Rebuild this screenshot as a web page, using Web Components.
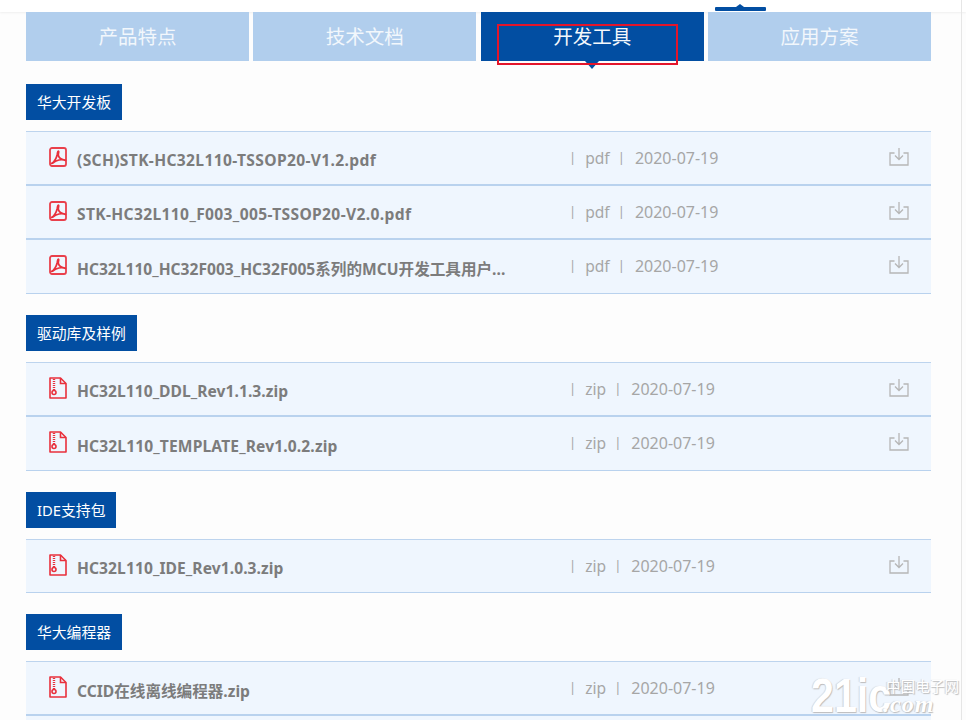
<!DOCTYPE html>
<html lang="zh">
<head>
<meta charset="utf-8">
<title>开发工具</title>
<style>
  html, body { margin: 0; height: 720px; overflow: hidden; background: #fdfdfd; }
  body { font-family: "Noto Sans", "Noto Sans CJK SC", sans-serif; }
</style>
</head>
<body>
<product-page>
  <page-topbar slot="top"></page-topbar>
  <tab-bar slot="top">
    <tab-item>产品特点</tab-item>
    <tab-item>技术文档</tab-item>
    <tab-item active>开发工具</tab-item>
    <tab-item>应用方案</tab-item>
  </tab-bar>

  <file-group label="华大开发板">
    <file-row kind="pdf" style="--track:.35px" name="(SCH)STK-HC32L110-TSSOP20-V1.2.pdf"></file-row>
    <file-row kind="pdf" style="--track:.35px" name="STK-HC32L110_F003_005-TSSOP20-V2.0.pdf"></file-row>
    <file-row kind="pdf" name="HC32L110_HC32F003_HC32F005系列的MCU开发工具用户..."></file-row>
  </file-group>
  <file-group label="驱动库及样例">
    <file-row kind="zip" style="--track:.05px" name="HC32L110_DDL_Rev1.1.3.zip"></file-row>
    <file-row kind="zip" style="--track:.13px" name="HC32L110_TEMPLATE_Rev1.0.2.zip"></file-row>
  </file-group>
  <file-group label="IDE支持包">
    <file-row kind="zip" style="--track:.08px" name="HC32L110_IDE_Rev1.0.3.zip"></file-row>
  </file-group>
  <file-group label="华大编程器">
    <file-row kind="zip" name="CCID在线离线编程器.zip"></file-row>
    <file-row></file-row>
  </file-group>

  <red-marker slot="over"></red-marker>
  <site-watermark slot="over"></site-watermark>
</product-page>

<script>
class ProductPage extends HTMLElement {
  connectedCallback() {
    this.attachShadow({ mode: 'open' });
    this.shadowRoot.innerHTML = `
      <style>
        :host { display: block; position: relative; height: 720px; overflow: hidden; }
        .main { display: flex; flex-direction: column; gap: 21px; margin: 23px 35px 0 26px; }
        .edge { position: absolute; top: 0; bottom: 0; left: 961px; width: 1px; background: #e6e6e6; }
      </style>
      <slot name="top"></slot>
      <div class="main"><slot></slot></div>
      <div class="edge"></div>
      <slot name="over"></slot>
    `;
  }
}

class PageTopbar extends HTMLElement {
  connectedCallback() {
    this.attachShadow({ mode: 'open' });
    this.shadowRoot.innerHTML = `
      <style>
        :host { display: block; position: relative; height: 12px; background: #fff; box-shadow: 0 1px 2px rgba(0,0,0,.06); }
        .mark { position: absolute; left: 715px; top: 7px; width: 51px; height: 4px; background: #024ea2; border-radius: 1px; }
        .mark::before { content: ""; position: absolute; left: 21px; top: -3px; border: 4px solid transparent; border-top: 0; border-bottom: 3px solid #024ea2; }
      </style>
      <div class="mark"></div>
    `;
  }
}

class TabBar extends HTMLElement {
  connectedCallback() {
    this.attachShadow({ mode: 'open' });
    this.shadowRoot.innerHTML = `
      <style>
        :host { display: grid; grid-template-columns: repeat(4, 1fr); column-gap: 4.5px; width: 905px; margin-left: 26px; position: relative; }
      </style>
      <slot></slot>
    `;
  }
}

class TabItem extends HTMLElement {
  connectedCallback() {
    this.attachShadow({ mode: 'open' });
    this.shadowRoot.innerHTML = `
      <style>
        :host { display: block; position: relative; height: 49px; line-height: 50px; text-align: center; background: #b1ceed; color: #f2f7fc; font-size: 19.5px; }
        :host([active]) { background: #024ea2; color: #f4f8fc; }
        :host([active])::after { content: ""; position: absolute; left: 50%; margin-left: -7px; top: 49px; border: 7px solid transparent; border-bottom: 0; border-top: 8px solid #024ea2; }
      </style>
      <slot></slot>
    `;
  }
}

class FileGroup extends HTMLElement {
  connectedCallback() {
    this.attachShadow({ mode: 'open' });
    this.shadowRoot.innerHTML = `
      <style>
        :host { display: block; }
        .label { display: inline-block; height: 36px; line-height: 36px; padding: 0 11px; background: #024ea2; color: #fff; font-size: 14.8px; vertical-align: top; }
        .list { margin-top: 11px; border-top: 1px solid #bdd4ee; }
      </style>
      <div class="label"></div>
      <div class="list"><slot></slot></div>
    `;
    this.shadowRoot.querySelector('.label').textContent = this.getAttribute('label');
  }
}

const ICONS = {
  // acrobat style sheet with the swoosh
  pdf: `<svg class="icon" viewBox="0 0 18 20">
      <rect x="1" y="1" width="16" height="18" rx="2" fill="none" stroke="#e9404c" stroke-width="1.800"/>
      <path d="M2.500 16.500c3-1.700 5-5.800 5.800-9.300.3-1.700.3-3.200.9-3.200.8 0 .4 2.300.1 3.200-.1 2 1.700 4.300 3.900 5.200 1.300.5 2.800.4 3.300 1-2.500-.9-7.300-.3-9.500.6-2 .8-3 2.800-4.500 2.500z" fill="none" stroke="#e9303c" stroke-width="1.700" stroke-linejoin="round"/>
    </svg>`,
  // sheet with a folded corner and a zipper
  zip: `<svg class="icon zip" viewBox="0 0 18 22">
      <path d="M1 1h10.500L17 6.500V21H1z" fill="none" stroke="#e9303c" stroke-width="1.600" stroke-linejoin="round"/>
      <path d="M11.500 1v5.500H17" fill="none" stroke="#e9303c" stroke-width="1.600"/>
      <path d="M5 2v11" stroke="#e9303c" stroke-width="2.400" stroke-dasharray="1 1" fill="none"/>
      <circle cx="5" cy="15.500" r="2" fill="none" stroke="#e9303c" stroke-width="1.600"/>
    </svg>`
};

class FileRow extends HTMLElement {
  connectedCallback() {
    const kind = this.getAttribute('kind');
    this.attachShadow({ mode: 'open' });
    const body = kind ? `
      ${ICONS[kind]}
      <span class="name"></span>
      <span class="meta"><span class="bar">|</span><span class="kind">${kind}</span><span class="bar">|</span><span class="date">2020-07-19</span></span>
      <svg class="down" viewBox="0 0 20 18" fill="none" stroke="#b6b6b6" stroke-width="1.300">
        <path d="M5.500 5H1v12h18V5h-4.500"/>
        <path d="M10 0v11M6 7.500l4 4 4-4"/>
      </svg>` : '';
    this.shadowRoot.innerHTML = `
      <style>
        :host { display: flex; align-items: center; height: 52px; background: #eff6fe; border-bottom: 2px solid #b9d2ee; color: #7c7c7c; }
        :host(:last-child) { border-bottom-width: 1px; height: 53px; }
        :host(:only-child) { height: 52px; }
        .icon { width: 18px; height: 20px; margin: -3px 0 0 23px; flex: none; }
        .icon.zip { height: 22px; }
        .name { width: 492px; margin-left: 10px; font-size: 15.6px; font-weight: 700; letter-spacing: var(--track, 0); flex: none; white-space: nowrap; position: relative; top: 2px; }
        .meta { display: flex; flex: none; font-size: 15.6px; color: #a6a6a6; white-space: nowrap; margin-top: -1px; }
        .bar { font-size: 13px; line-height: 21px; }
        .kind { margin: 0 8px 0 9px; }
        .date { margin-left: 10px; font-size: 16px; }
        .down { width: 20px; height: 18px; margin: -3px 22px 0 auto; flex: none; }
      </style>
      ${body}
    `;
    if (kind) this.shadowRoot.querySelector('.name').textContent = this.getAttribute('name');
  }
}

class RedMarker extends HTMLElement {
  connectedCallback() {
    this.attachShadow({ mode: 'open' });
    this.shadowRoot.innerHTML = `
      <style>
        :host { display: block; position: absolute; left: 497px; top: 24px; width: 177px; height: 37px; border: 2px solid #e4152b; }
      </style>
    `;
  }
}

class SiteWatermark extends HTMLElement {
  connectedCallback() {
    this.attachShadow({ mode: 'open' });
    this.shadowRoot.innerHTML = `
      <style>
        :host { display: block; position: absolute; left: 811px; top: 672px; width: 150px; height: 48px; color: #fff; font-family: "Liberation Sans", sans-serif; text-shadow: 1px 1px 1px #bdbdbd, -1px 0 1px #d0d0d0; }
        .big { position: absolute; left: 0; top: 5px; font-size: 49px; line-height: 36px; font-weight: 700; transform: scaleX(.84); transform-origin: 0 0; }
        .cn { position: absolute; left: 75px; top: 5px; font: 14.600px/18px "Noto Sans CJK SC", sans-serif; white-space: nowrap; }
        .com { position: absolute; left: 72px; top: 23px; font: italic 700 24px/18px "Liberation Serif", serif; letter-spacing: 1px; }
      </style>
      <span class="big">21ic</span>
      <span class="cn">中国电子网</span>
      <span class="com">.com</span>
    `;
  }
}

customElements.define('product-page', ProductPage);
customElements.define('page-topbar', PageTopbar);
customElements.define('tab-bar', TabBar);
customElements.define('tab-item', TabItem);
customElements.define('file-group', FileGroup);
customElements.define('file-row', FileRow);
customElements.define('red-marker', RedMarker);
customElements.define('site-watermark', SiteWatermark);
</script>
</body>
</html>
